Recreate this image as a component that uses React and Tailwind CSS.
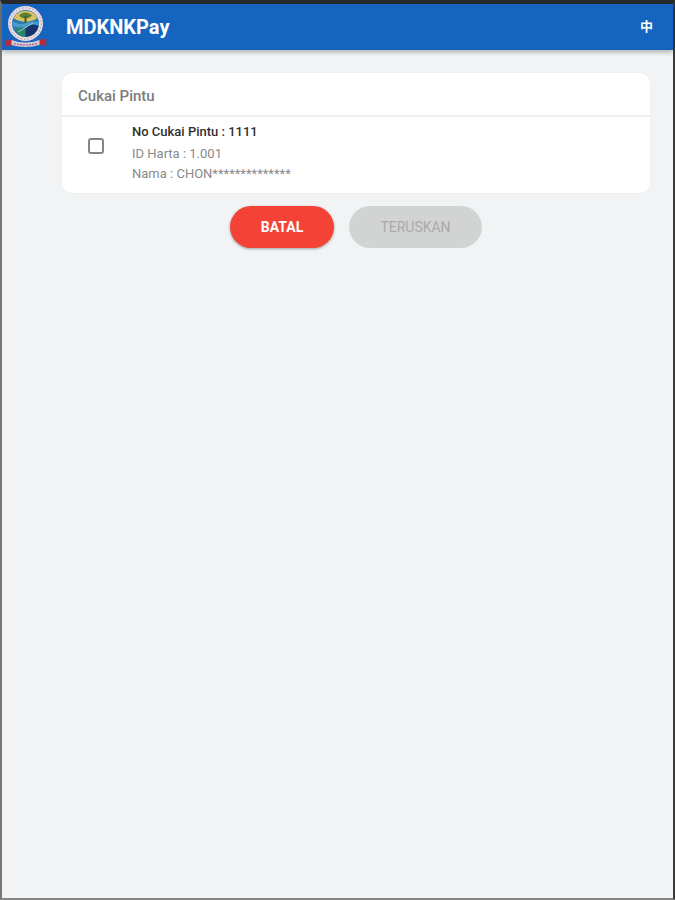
function CouncilLogo() {
  return (
    <svg viewBox="0 0 44 44" className="h-11 w-11 shrink-0" role="img" aria-label="MDKNKPay">
      <path d="M.5 35.500l8-1v6l-8 .5 1.500-3zM43 34.500l-8-.5v6l8 .5-1.500-3z" fill="#b8283c" />
      <circle cx="21.500" cy="18.500" r="17.500" fill="#e6dce4" />
      <circle cx="21.500" cy="18.500" r="15.700" fill="none" stroke="#bd8c9a" strokeWidth="1" strokeDasharray="1.500 2" />
      <circle cx="21.500" cy="18.500" r="13.500" fill="#2a78b4" />
      <path d="M9.500 13a13.500 13.500 0 0 1 24 0c-7 5-17 5-24 0z" fill="#d8c562" />
      <path d="M15 10.500c4-4 9-4 13 0-3 4-10 4-13 0z" fill="#5d7c34" />
      <path d="M20.500 11h2v8h-2z" fill="#4c562e" />
      <path d="M8.500 16.500q7 4 13 1.500t13-1l.3 4q-7-1-13 1t-13-1z" fill="#4b9ccc" />
      <path d="M10.500 25q5-4 11-2.500V32q-7-.5-11-7z" fill="#2b8569" />
      <path d="M21.500 22.500q6-5 13-1.500Q33 30.500 21.500 32z" fill="#17346e" />
      <path d="M14 27l15-9" stroke="#8fcbdc" strokeWidth="1" />
      <path d="M7.500 35q14 5 28 0v5q-14 4-28 0z" fill="#d5c9d6" />
      <path d="M10 38.500q11.500 3 23 0" fill="none" stroke="#a95f73" strokeWidth="1.200" strokeDasharray="2 1" />
    </svg>
  );
}

export default function App() {
  return (
    <div className="flex min-h-screen flex-col border-t-4 border-r-2 border-b-2 border-l-2 border-t-[#292b2c] border-r-[#3a3a3a] border-b-[#858585] border-l-[#777777] bg-[#f1f3f4] font-['Roboto','Noto_Sans_CJK_SC',sans-serif]">
      <header className="flex h-[46px] items-center bg-[#1565c0] pr-5 pl-[2px] text-white shadow-[0_2px_5px_rgba(0,0,0,0.3)]">
        <CouncilLogo />
        <h1 className="ml-[18px] text-xl font-bold">MDKNKPay</h1>
        <button type="button" aria-label="中文" className="ml-auto text-[13px] font-bold">中</button>
      </header>
      <main className="pt-[23px] pr-[23px] pl-[60px]">
        <section className="rounded-[10px] bg-white shadow-[0_0_2px_rgba(0,0,0,0.06)]">
          <h2 className="flex h-11 items-center border-b-2 border-[#efefef] px-4 pt-1 text-[15px] font-medium text-[#7c7c7c]">
            Cukai Pintu
          </h2>
          <label className="flex h-[76px] items-start pt-[5px] pl-[26px]">
            <input type="checkbox" className="mt-4 h-4 w-4 shrink-0 appearance-none rounded-[3px] border-2 border-[#858585] bg-white checked:bg-[#1565c0]" />
            <span className="ml-7 flex flex-col text-[13px] leading-5 text-[#8a8a8a]">
              <span className="mb-[2px] font-medium text-[#303030]">No Cukai Pintu : 1111</span>
              <span>ID Harta : 1.001</span>
              <span>Nama : CHON**************</span>
            </span>
          </label>
        </section>
        <div className="mt-[13px] flex justify-center gap-[15px]">
          <button type="button" className="h-[42px] w-[104px] rounded-full bg-[#f44336] text-sm font-bold text-white shadow-[0_1px_3px_rgba(0,0,0,0.35)]">BATAL</button>
          <button type="button" disabled className="h-[42px] w-[133px] rounded-full bg-[#d2d3d3] text-sm text-[#a9aaaa]">TERUSKAN</button>
        </div>
      </main>
    </div>
  );
}
